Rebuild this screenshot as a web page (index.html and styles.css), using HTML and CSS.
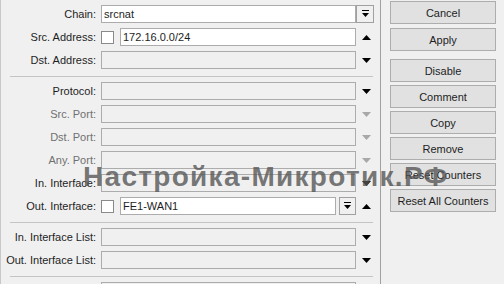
FILE: index.html
```html
<!DOCTYPE html>
<html lang="ru">

<head>
    <meta charset="UTF-8">
    <meta name="viewport" content="width=device-width, initial-scale=1.0">
    <link rel="stylesheet" href="styles.css">
    <title>NAT Rule</title>
</head>

<body>
    <div class="window">
        <!-- General tab fields -->
        <div class="form">
            <div class="row">
                <label class="label">Chain:</label>
                <div class="field"><div class="input white">srcnat</div></div>
                <div class="side">
                    <span class="drop-btn">
                        <svg width="9" height="8" viewBox="0 0 9 8"><rect x="1" y="0" width="7" height="1" fill="#000"/><path d="M1 3h7l-3.5 4z" fill="#000"/></svg>
                    </span>
                </div>
            </div>
            <div class="row">
                <label class="label">Src. Address:</label>
                <div class="field">
                    <span class="check"></span>
                    <div class="input white">172.16.0.0/24</div>
                </div>
                <div class="side"><svg class="arrow" width="9" height="5" viewBox="0 0 9 5"><path d="M0 5h9L4.5 0z" fill="#000"/></svg></div>
            </div>
            <div class="row">
                <label class="label">Dst. Address:</label>
                <div class="field"><div class="input"></div></div>
                <div class="side"><svg class="arrow" width="9" height="5" viewBox="0 0 9 5"><path d="M0 0h9L4.5 5z" fill="#000"/></svg></div>
            </div>

            <div class="sep"></div>

            <div class="row">
                <label class="label">Protocol:</label>
                <div class="field"><div class="input"></div></div>
                <div class="side"><svg class="arrow" width="9" height="5" viewBox="0 0 9 5"><path d="M0 0h9L4.5 5z" fill="#000"/></svg></div>
            </div>
            <div class="row disabled">
                <label class="label">Src. Port:</label>
                <div class="field"><div class="input"></div></div>
                <div class="side"><svg class="arrow" width="9" height="5" viewBox="0 0 9 5"><path d="M0 0h9L4.5 5z" fill="#a8a8a8"/></svg></div>
            </div>
            <div class="row disabled">
                <label class="label">Dst. Port:</label>
                <div class="field"><div class="input"></div></div>
                <div class="side"><svg class="arrow" width="9" height="5" viewBox="0 0 9 5"><path d="M0 0h9L4.5 5z" fill="#a8a8a8"/></svg></div>
            </div>
            <div class="row disabled">
                <label class="label">Any. Port:</label>
                <div class="field"><div class="input"></div></div>
                <div class="side"><svg class="arrow" width="9" height="5" viewBox="0 0 9 5"><path d="M0 0h9L4.5 5z" fill="#a8a8a8"/></svg></div>
            </div>
            <div class="row">
                <label class="label">In. Interface:</label>
                <div class="field"><div class="input"></div></div>
                <div class="side"><svg class="arrow" width="9" height="5" viewBox="0 0 9 5"><path d="M0 0h9L4.5 5z" fill="#000"/></svg></div>
            </div>
            <div class="row">
                <label class="label">Out. Interface:</label>
                <div class="field">
                    <span class="check"></span>
                    <div class="input white">FE1-WAN1</div>
                    <span class="drop-btn small">
                        <svg width="9" height="8" viewBox="0 0 9 8"><rect x="1" y="0" width="7" height="1" fill="#000"/><path d="M1 3h7l-3.5 4z" fill="#000"/></svg>
                    </span>
                </div>
                <div class="side"><svg class="arrow" width="9" height="5" viewBox="0 0 9 5"><path d="M0 5h9L4.5 0z" fill="#000"/></svg></div>
            </div>

            <div class="sep"></div>

            <div class="row">
                <label class="label">In. Interface List:</label>
                <div class="field"><div class="input"></div></div>
                <div class="side"><svg class="arrow" width="9" height="5" viewBox="0 0 9 5"><path d="M0 0h9L4.5 5z" fill="#000"/></svg></div>
            </div>
            <div class="row">
                <label class="label">Out. Interface List:</label>
                <div class="field"><div class="input"></div></div>
                <div class="side"><svg class="arrow" width="9" height="5" viewBox="0 0 9 5"><path d="M0 0h9L4.5 5z" fill="#000"/></svg></div>
            </div>

            <div class="sep"></div>

            <div class="row">
                <label class="label"></label>
                <div class="field"><div class="input"></div></div>
                <div class="side"></div>
            </div>
        </div>

        <!-- Buttons on the right -->
        <div class="actions">
            <button class="btn gap-4">Cancel</button>
            <button class="btn gap-8">Apply</button>
            <button class="btn">Disable</button>
            <button class="btn">Comment</button>
            <button class="btn">Copy</button>
            <button class="btn">Remove</button>
            <button class="btn">Reset Counters</button>
            <button class="btn">Reset All Counters</button>
        </div>

        <div class="watermark">Настройка-Микротик.РФ</div>
    </div>
</body>

</html>
```

FILE: styles.css
```css
body {
    margin: 0;
    padding: 0;
    background-color: #f0f0f0;
    font-family: 'Liberation Sans', Arial, sans-serif;
    font-size: 11px;
    color: #1e1e1e;
    height: 284px;
    overflow: hidden;
}

.window {
    position: relative;
    display: flex;
    height: 284px;
    overflow: hidden;
}

.form {
    width: 380px;
    padding-top: 3px;
    box-shadow: inset 1px 0 0 #c8c8c8;
    overflow: hidden;
}

.row {
    display: grid;
    grid-template-columns: 101px 255px 18px;
    height: 23px;
    padding-top: 2px;
    box-sizing: border-box;
}

.label {
    padding-right: 5px;
    text-align: right;
    line-height: 18px;
    white-space: nowrap;
}

.row.disabled .label {
    color: #707070;
}

.field {
    display: flex;
    align-items: center;
    height: 18px;
}

.input {
    flex: 1;
    height: 18px;
    box-sizing: border-box;
    border: 1px solid #acacac;
    background-color: #f0f0f0;
    padding-left: 2px;
    line-height: 16px;
    white-space: nowrap;
}

.input.white {
    background-color: #fff;
}

.check {
    width: 13px;
    height: 13px;
    box-sizing: border-box;
    border: 1px solid #8a8a8a;
    background-color: #fff;
    margin-right: 6px;
}

.side {
    display: flex;
    align-items: center;
    height: 18px;
}

.arrow {
    margin-left: 6px;
}

.drop-btn {
    display: flex;
    align-items: center;
    justify-content: center;
    width: 18px;
    height: 18px;
    box-sizing: border-box;
    border: 1px solid #a0a0a0;
    background-color: #f0f0f0;
}

.drop-btn.small {
    width: 17px;
    margin-left: 3px;
}

.sep {
    width: 363px;
    margin: 4px 0 3px 10px;
    border-top: 1px solid #c4c4c4;
}

.actions {
    flex: 1;
    border-left: 1px solid #a0a0a0;
    padding: 1px 0 0 9px;
    display: flex;
    flex-direction: column;
    align-items: flex-start;
}

.btn {
    width: 106px;
    height: 23px;
    margin-bottom: 3px;
    padding: 0;
    border: 1px solid #adadad;
    background-color: #e1e1e1;
    font-family: 'Liberation Sans', Arial, sans-serif;
    font-size: 11px;
    color: #1e1e1e;
}

.btn.gap-4 {
    margin-bottom: 4px;
}

.btn.gap-8 {
    margin-bottom: 8px;
}

.watermark {
    position: absolute;
    left: 83px;
    top: 163px;
    font-size: 28px;
    line-height: 28px;
    font-weight: bold;
    letter-spacing: 1.3px;
    color: rgba(85, 85, 85, 0.8);
    white-space: nowrap;
}
```
